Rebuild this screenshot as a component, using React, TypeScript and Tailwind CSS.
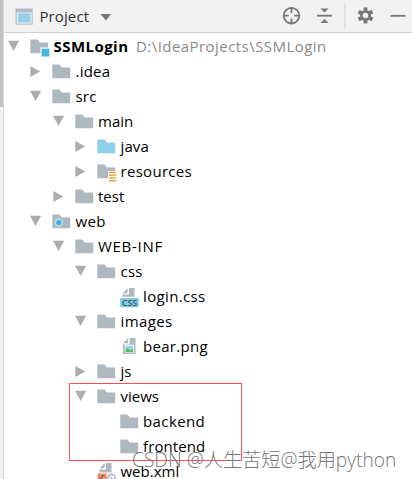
import type { ReactNode } from 'react';
import clsx from 'clsx';

type IconKind = 'folder' | 'module' | 'source' | 'resources' | 'web' | 'css' | 'image' | 'xml';

interface TreeNode {
  name: string;
  indent: string;
  icon: IconKind;
  state?: 'open' | 'closed';
  path?: string;
  tracking?: string;
}

const nodes: TreeNode[] = [
  {
    name: 'SSMLogin',
    indent: 'pl-[4px]',
    icon: 'module',
    state: 'open',
    path: 'D:\\IdeaProjects\\SSMLogin',
    tracking: 'tracking-[0.45px]',
  },
  { name: '.idea', indent: 'pl-[26px]', icon: 'folder', state: 'closed', tracking: 'tracking-[0.2px]' },
  { name: 'src', indent: 'pl-[26px]', icon: 'folder', state: 'open', tracking: 'tracking-[0.2px]' },
  { name: 'main', indent: 'pl-[48.5px]', icon: 'folder', state: 'open' },
  { name: 'java', indent: 'pl-[71px]', icon: 'source', state: 'closed', tracking: 'tracking-[0.1px]' },
  { name: 'resources', indent: 'pl-[71px]', icon: 'resources', state: 'closed', tracking: 'tracking-[0.3px]' },
  { name: 'test', indent: 'pl-[48.5px]', icon: 'folder', state: 'closed' },
  { name: 'web', indent: 'pl-[26px]', icon: 'web', state: 'open', tracking: 'tracking-[0.3px]' },
  { name: 'WEB-INF', indent: 'pl-[48.5px]', icon: 'folder', state: 'open', tracking: 'tracking-[0.7px]' },
  { name: 'css', indent: 'pl-[71px]', icon: 'folder', state: 'open', tracking: 'tracking-[0.2px]' },
  { name: 'login.css', indent: 'pl-[93.5px]', icon: 'css', tracking: 'tracking-[0.35px]' },
  { name: 'images', indent: 'pl-[71px]', icon: 'folder', state: 'open', tracking: 'tracking-[0.4px]' },
  { name: 'bear.png', indent: 'pl-[93.5px]', icon: 'image', tracking: 'tracking-[0.3px]' },
  { name: 'js', indent: 'pl-[71px]', icon: 'folder', state: 'closed' },
  { name: 'views', indent: 'pl-[71px]', icon: 'folder', state: 'open' },
  { name: 'backend', indent: 'pl-[93.5px]', icon: 'folder', tracking: 'tracking-[0.4px]' },
  { name: 'frontend', indent: 'pl-[93.5px]', icon: 'folder', tracking: 'tracking-[0.1px]' },
  { name: 'web.xml', indent: 'pl-[71px]', icon: 'xml' },
];

function Arrow({ state }: { state?: 'open' | 'closed' }) {
  return (
    <svg width="22" height="25" viewBox="0 0 22 25" fill="#adadad" className="shrink-0">
      {state === 'open' && <path d="M0 6.8h11.2L5.6 17z" />}
      {state === 'closed' && <path d="M0.3 7v11l10-5.5z" />}
    </svg>
  );
}

function Folder({ color = '#adb8bf' }: { color?: string }) {
  return <path d="M0.3 5.5h7.2l2.2 3h8.5v10.8H0.3z" fill={color} />;
}

// Page with a folded top-left corner
function Page() {
  return <path d="M9 4h5.500v16H2.500v-9.500h6.500zM2.500 9.300 7.600 4.200v5.100z" fill="#adb8bf" />;
}

const drawings: Record<IconKind, ReactNode> = {
  folder: <Folder />,
  source: <Folder color="#8bd1e9" />,
  module: (
    <>
      <Folder />
      <path d="M10.500 13.500h9v10h-9z" fill="#fff" />
      <path d="M11.600 14.700h7.700v7.800h-7.700z" fill="#40b6e0" />
    </>
  ),
  resources: (
    <>
      <Folder />
      <path d="M11 12h9v11h-9z" fill="#fff" />
      <path d="M12 13.600h7.200M12 16.300h7.200M12 19h7.200M12 21.700h7.200" stroke="#dfa64b" strokeWidth="1.500" />
    </>
  ),
  web: (
    <>
      <Folder />
      <circle cx="6.800" cy="13.500" r="4" fill="#c6dfe9" />
      <circle cx="6.800" cy="13.500" r="2.600" fill="#35b2df" />
    </>
  ),
  css: (
    <>
      <Page />
      <path d="M0 12.700h20v12H0z" fill="#fff" />
      <path d="M0.200 14h18.600v9.200H0.200z" fill="#7ecbe3" />
      <text x="9.500" y="21.600" textAnchor="middle" textLength="15.500" fontSize="9" fontWeight="600" fill="#315968">
        CSS
      </text>
    </>
  ),
  image: (
    <>
      <path d="M9.500 4h6v16H3v-9.500h6.500zM3 9.300 8.100 4.200v5.100z" fill="#adb8bf" />
      <path d="M4.800 10.800h9v8h-9z" fill="#fff" />
      <path d="M5.500 11.700h7.600v4H5.500z" fill="#8fd4ec" />
      <path d="M5.500 18.200v-2.700l2.300-1.300 2.500 1.800 2.800-1v3.200z" fill="#66b85c" />
    </>
  ),
  xml: (
    <>
      <Page />
      <path d="M0 13.500h20V25H0z" fill="#fff" />
      <path d="M0.500 14.500h9.200V25H0.500z" fill="#ef8862" />
      <path d="M6.500 16 3.500 19.500l3 3.500" fill="none" stroke="#7d6055" strokeWidth="1.200" />
      <circle cx="14.500" cy="19" r="3.700" fill="none" stroke="#b4bec4" strokeWidth="1.800" />
      <path d="m12 17 5 4.500" stroke="#b4bec4" strokeWidth="1.500" />
    </>
  ),
};

function Row({ node }: { node: TreeNode }) {
  return (
    <div className={clsx('flex h-[25px] shrink-0 items-center whitespace-nowrap', node.indent)}>
      <Arrow state={node.state} />
      <svg width="23" height="25" viewBox="0 0 23 25" className="mr-[0.5px] shrink-0">
        {drawings[node.icon]}
      </svg>
      <span className={clsx('leading-[25px]', node.path && 'font-bold', node.tracking)}>{node.name}</span>
      {node.path && <span className="ml-[7.5px] tracking-[0.45px] text-[#8a8a8a]">{node.path}</span>}
    </div>
  );
}

function Toolbar() {
  return (
    <header className="flex h-[33px] shrink-0 items-center border-b border-[#cfcfcf] bg-[#f2f2f2]">
      <svg width="35.5" height="32" viewBox="0 0 35.5 32" className="shrink-0">
        <path d="M11.500 8.500h17.200v16.200H11.500z" fill="#b3bdc3" />
        <path d="M12.800 12.500h14.700v11H12.800z" fill="#f4f7f8" />
        <path d="M13.800 13.300h12.700v9.300H13.800z" fill="#92d3eb" />
      </svg>
      <span className="tracking-[0.1px] text-[#303030]">Project</span>
      <svg width="14" height="32" viewBox="0 0 14 32" className="ml-[9.5px]">
        <path d="M1.500 14h10.600L6.800 20.500z" fill="#777" />
      </svg>
      <svg width="136" height="32" viewBox="0 0 136 32" className="ml-auto shrink-0">
        <g fill="none" stroke="#777" strokeWidth="1.800">
          <circle cx="15.500" cy="15.700" r="7.800" />
          <path d="M15.500 7.500v5.500M15.500 18.400v5.500M7.200 15.700h5.600M18.200 15.700h5.600" />
          <path d="M41 15.700h15" />
          <circle cx="89.500" cy="15.500" r="4.200" strokeWidth="2.800" />
          <path d="M114.500 15.800h15" />
        </g>
        <path d="M44.500 8.500h8l-4 4zM44.500 23h8l-4-4z" fill="#777" />
        <path
          d="M89.500 7.500v3M89.500 20.500v3M82.600 11.500l2.600 1.500M93.800 18l2.600 1.500M82.600 19.500l2.600-1.500M93.800 13l2.600-1.500"
          stroke="#777"
          strokeWidth="3.800"
        />
        <path d="M69 3.500v24.500" stroke="#d0d0d0" />
      </svg>
    </header>
  );
}

export default function App() {
  return (
    <div className="relative flex h-[479px] w-[412px] overflow-hidden bg-white font-['Open_Sans','Noto_Sans',sans-serif] text-[15px] text-black">
      <div className="flex w-1 shrink-0 flex-col border-r border-[#d5d5d5] bg-[#f2f2f2]">
        <div className="h-[107px] bg-[#c2c2c2]" />
      </div>
      <main className="flex min-w-0 flex-1 flex-col">
        <Toolbar />
        <div className="flex flex-col pt-px">
          {nodes.map((node) => (
            <Row key={node.name} node={node} />
          ))}
        </div>
      </main>
      <div className="absolute left-[69px] top-[383px] h-[78px] w-[173px] border border-[#ff5050]" />
      <div className="absolute left-[132px] top-[447px] whitespace-nowrap font-['Open_Sans','Noto_Sans_CJK_SC',sans-serif] text-[19.2px] font-light leading-[26px] text-[#777]">
        CSDN @人生苦短@我用python
      </div>
    </div>
  );
}
